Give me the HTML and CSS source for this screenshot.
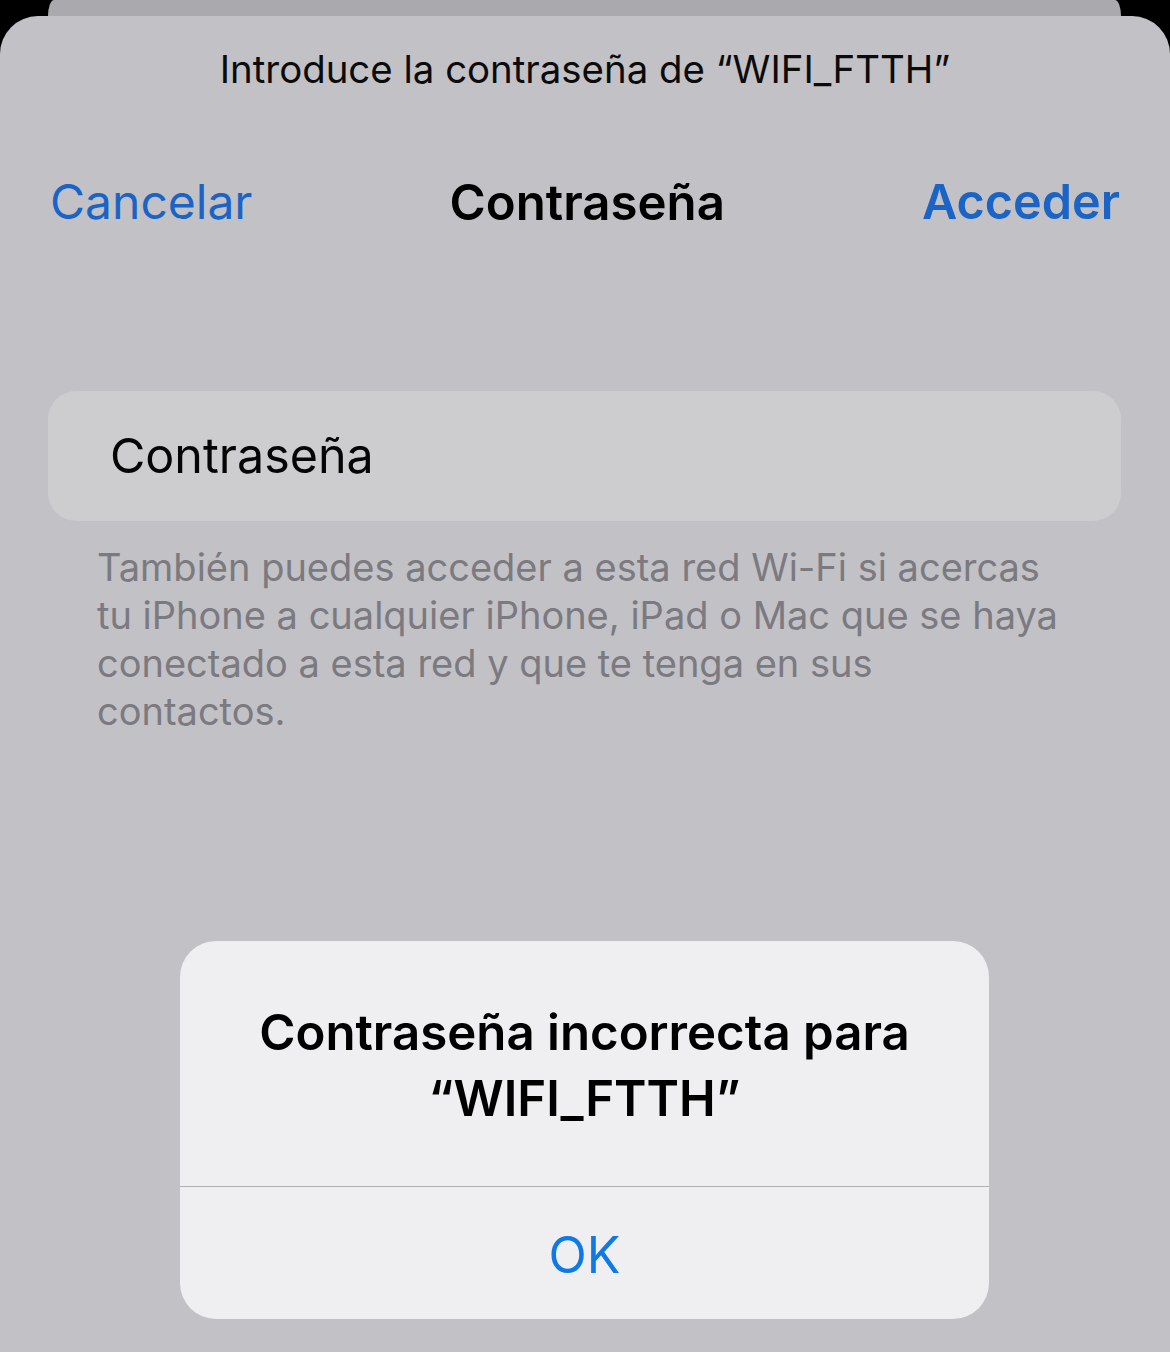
FILE: index.html
```html
<!DOCTYPE html>
<html lang="es">
<head>
<meta charset="utf-8">
<link rel="stylesheet" href="styles.css">
</head>
<body>
<div class="back-sheet"></div>
<div class="sheet">
  <div class="prompt">Introduce la contraseña de “WIFI_FTTH”</div>
  <div class="nav">
    <span class="nav-btn cancel">Cancelar</span>
    <span class="nav-title">Contraseña</span>
    <span class="nav-btn join">Acceder</span>
  </div>
  <div class="field">Contraseña</div>
  <p class="footer">También puedes acceder a esta red Wi-Fi si acercas tu iPhone a cualquier iPhone, iPad o Mac que se haya conectado a esta red y que te tenga en sus contactos.</p>

  <div class="alert">
    <div class="alert-title">Contraseña incorrecta para<br>“WIFI_FTTH”</div>
    <div class="alert-btn">OK</div>
  </div>
</div>
</body>
</html>
```

FILE: styles.css
```css
html, body {
  margin: 0;
  padding: 0;
  background: #000;
}
body {
  width: 1170px;
  height: 1352px;
  overflow: hidden;
  font-family: Inter, "Noto Sans", sans-serif;
  -webkit-font-smoothing: antialiased;
}
.back-sheet {
  margin: 0 49px 0 48px;
  height: 16px;
  background: #aaa9ae;
  border-radius: 6px 6px 0 0 / 16px 16px 0 0;
}
.sheet {
  position: relative;
  height: 1336px;
  background: #c2c1c6;
  border-radius: 38px 38px 0 0;
}
.prompt {
  padding-top: 28px;
  height: 50px;
  line-height: 50px;
  text-align: center;
  font-size: 38.4px;
  color: #0b0b0c;
}
.nav {
  margin-top: 76px;
  height: 64px;
  line-height: 64px;
  display: flex;
  justify-content: space-between;
  padding: 0 50px 0 50px;
  font-size: 48px;
}
.nav-btn {
  color: #1a64c6;
}
.join {
  font-weight: 600;
  font-size: 48.5px;
}
.nav-title {
  font-weight: 600;
  font-size: 49.2px;
  color: #000;
}
.field {
  margin: 157px 49px 0 48px;
  height: 130px;
  line-height: 130px;
  padding-left: 62px;
  box-sizing: border-box;
  background: #cdcdcf;
  border-radius: 28px;
  font-size: 48.4px;
  color: #050505;
}
.footer {
  margin: 22px 105px 0 97px;
  font-size: 38px;
  line-height: 48px;
  color: #7b7a80;
}
.alert {
  position: absolute;
  left: 180px;
  top: 925px;
  width: 809px;
  height: 378px;
  background: #efeff2;
  border-radius: 36px;
  display: flex;
  flex-direction: column;
}
.alert-title {
  height: 246px;
  box-sizing: border-box;
  padding-top: 58px;
  text-align: center;
  font-size: 49.2px;
  line-height: 66px;
  font-weight: 600;
  color: #000;
  border-bottom: 1.5px solid #b0b0b4;
}
.alert-btn {
  flex: 1;
  display: flex;
  align-items: center;
  justify-content: center;
  padding-top: 4px;
  font-size: 50px;
  color: #0f7ae6;
}
```
